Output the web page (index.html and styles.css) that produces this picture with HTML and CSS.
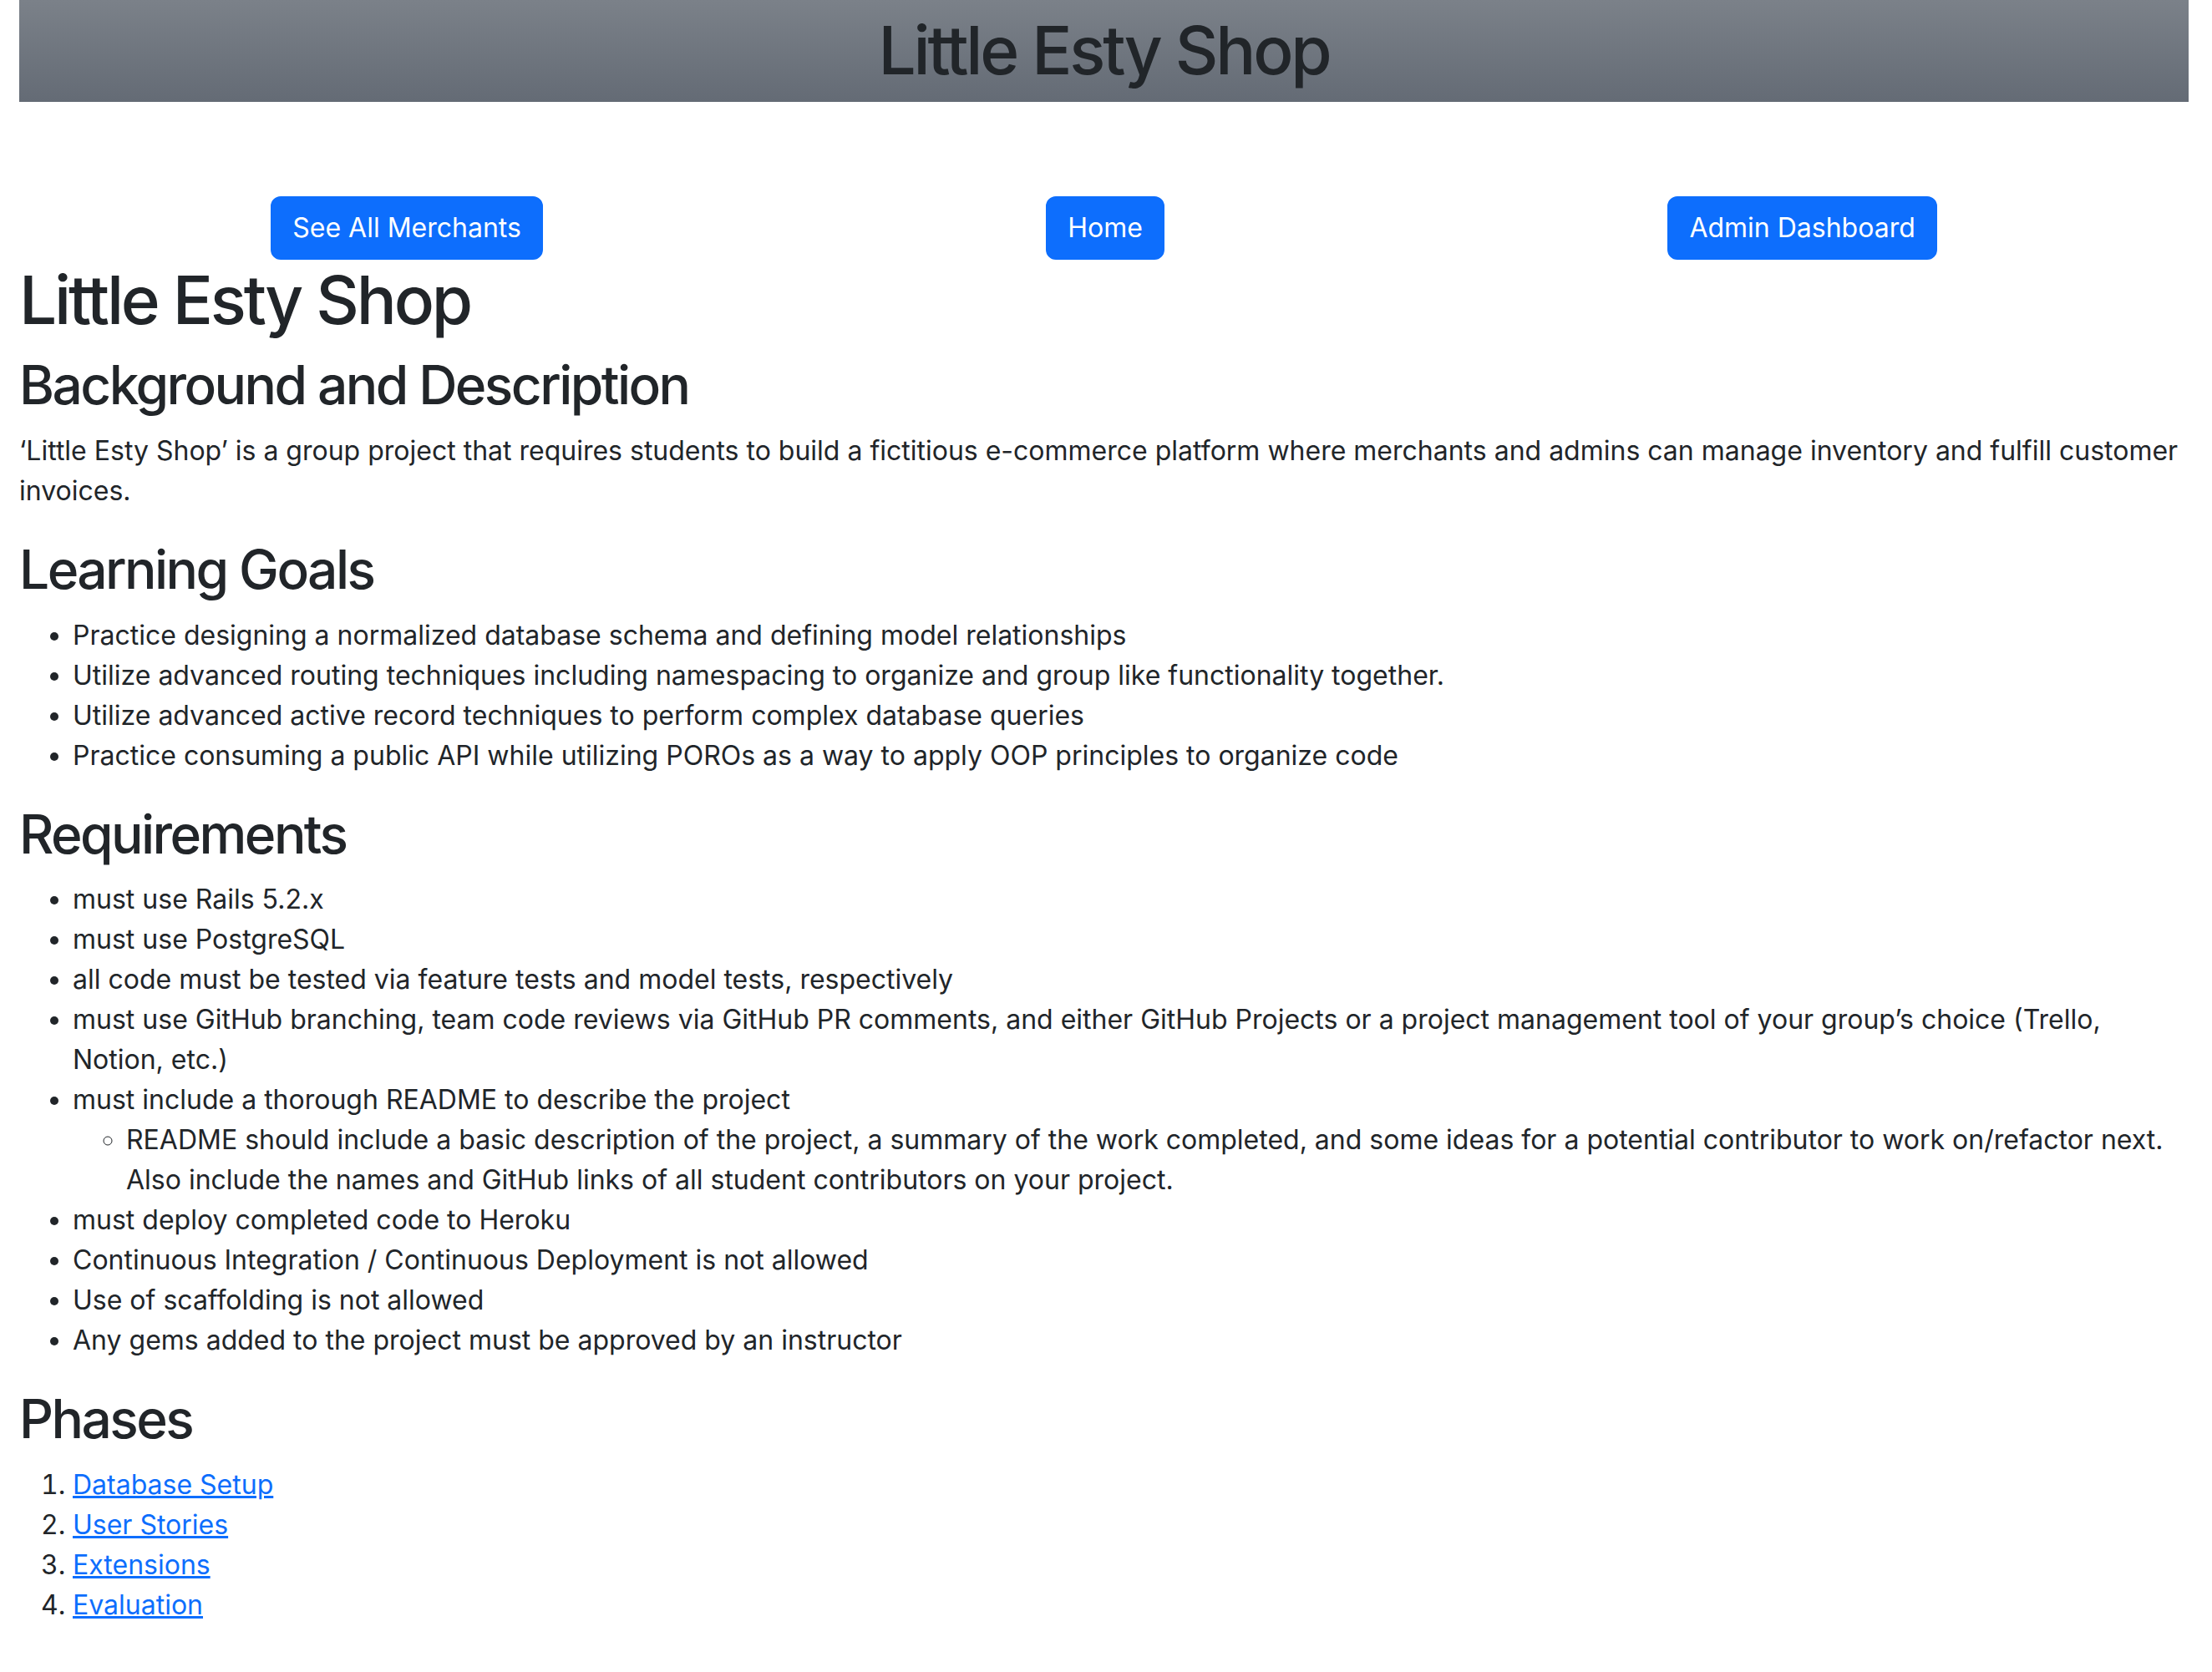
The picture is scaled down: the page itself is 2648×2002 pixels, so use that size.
FILE: index.html
```html
<!DOCTYPE html>
<html lang="en">
<head>
<meta charset="utf-8">
<title>Little Esty Shop</title>
<link rel="stylesheet" href="styles.css">
</head>
<body>
<div class="container">
  <h1 class="banner">Little Esty Shop</h1>
  <nav class="nav-row">
    <a class="btn" href="#">See All Merchants</a>
    <a class="btn" href="#">Home</a>
    <a class="btn" href="#">Admin Dashboard</a>
  </nav>
  <h1>Little Esty Shop</h1>
  <h2>Background and Description</h2>
  <p>‘Little Esty Shop’ is a group project that requires students to build a fictitious e-commerce platform where merchants and admins can manage inventory and fulfill customer invoices.</p>
  <h2>Learning Goals</h2>
  <ul>
    <li>Practice designing a normalized database schema and defining model relationships</li>
    <li>Utilize advanced routing techniques including namespacing to organize and group like functionality together.</li>
    <li>Utilize advanced active record techniques to perform complex database queries</li>
    <li>Practice consuming a public API while utilizing POROs as a way to apply OOP principles to organize code</li>
  </ul>
  <h2>Requirements</h2>
  <ul>
    <li>must use Rails 5.2.x</li>
    <li>must use PostgreSQL</li>
    <li>all code must be tested via feature tests and model tests, respectively</li>
    <li>must use GitHub branching, team code reviews via GitHub PR comments, and either GitHub Projects or a project management tool of your group’s choice (Trello, Notion, etc.)</li>
    <li>must include a thorough README to describe the project
      <ul class="sub">
        <li>README should include a basic description of the project, a summary of the work completed, and some ideas for a potential contributor to work on/refactor next. Also include the names and GitHub links of all student contributors on your project.</li>
      </ul>
    </li>
    <li>must deploy completed code to Heroku</li>
    <li>Continuous Integration / Continuous Deployment is not allowed</li>
    <li>Use of scaffolding is not allowed</li>
    <li>Any gems added to the project must be approved by an instructor</li>
  </ul>
  <h2>Phases</h2>
  <ol>
    <li><a href="#">Database Setup</a></li>
    <li><a href="#">User Stories</a></li>
    <li><a href="#">Extensions</a></li>
    <li><a href="#">Evaluation</a></li>
  </ol>
</div>
</body>
</html>
```

FILE: styles.css
```css
* { box-sizing: border-box; }
html, body { margin: 0; padding: 0; background: #fff; }
body {
  font-family: Inter, "Noto Sans", "Liberation Sans", sans-serif;
  font-size: 32px;
  line-height: 1.5;
  color: #212529;
}
.container {
  padding: 0 28px 0 23px;
}
h1, h2 {
  margin: 0 0 16px 0;
  font-weight: 500;
  line-height: 1.2;
  letter-spacing: -0.04em;
}
h1 { font-size: 80px; }
h2 { font-size: 64px; }
.banner {
  background: linear-gradient(180deg, #7b8189 0%, #646b75 100%);
  text-align: center;
  padding: 12px 0 14px;
  margin: 0 0 113px 0;
}
.nav-row {
  display: flex;
  justify-content: space-around;
  align-items: center;
}
.btn {
  display: inline-block;
  padding: 12px 24px;
  border: 2px solid #0d6efd;
  border-radius: 12px;
  background: #0d6efd;
  color: #fff;
  text-decoration: none;
  font-size: 32px;
  line-height: 48px;
}
p { margin: 0 0 32px 0; }
ul, ol {
  margin: 0 0 32px 0;
  padding-left: 64px;
}
ul.sub {
  margin: 0;
  list-style-type: circle;
}
a { color: #0d6efd; }
```
